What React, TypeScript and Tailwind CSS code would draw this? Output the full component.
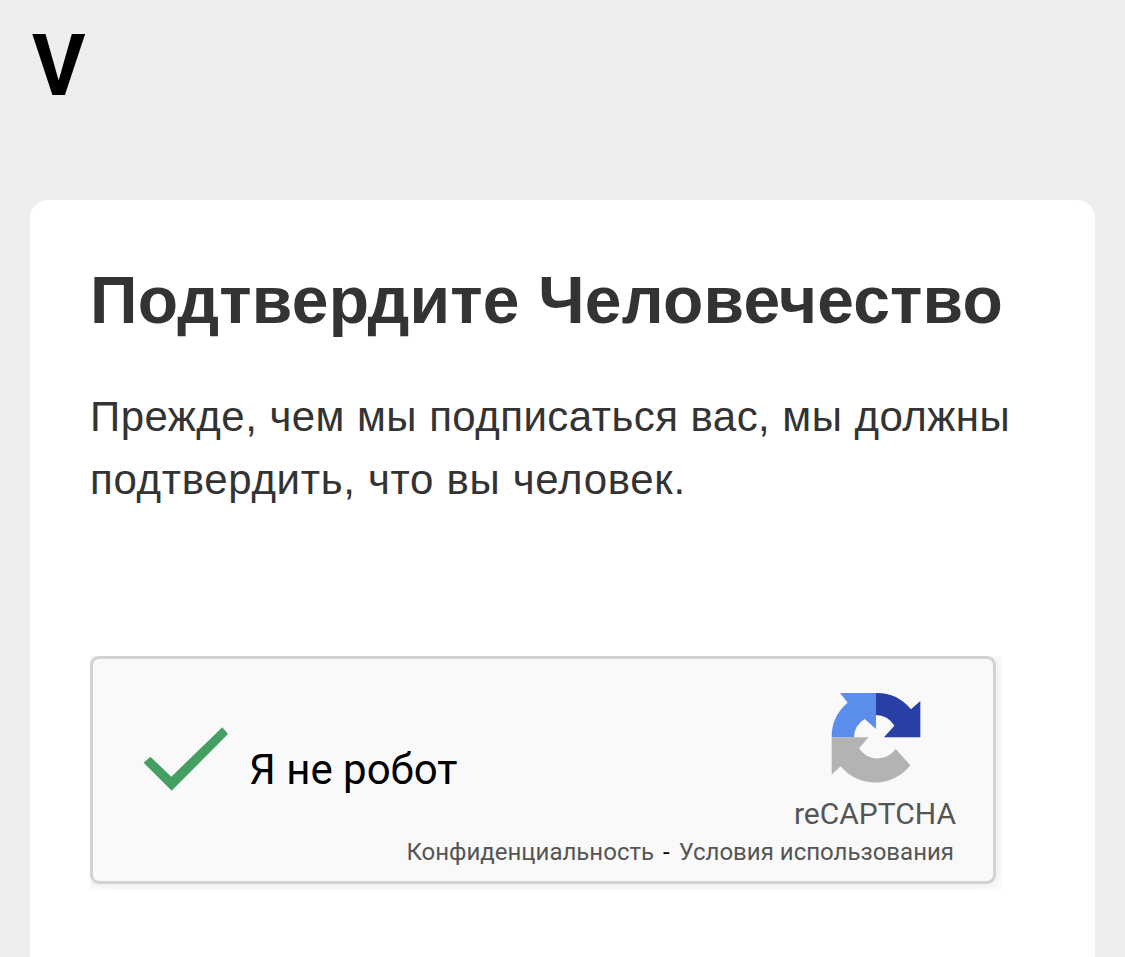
// Human verification page
function CheckMark() {
  return (
    <svg className="block h-[66px] w-[88px] blur-[0.6px]" viewBox="186 258 264 198" fill="#459f62">
      <path d="M191 368L211 350L274 410L427 262L444 282L275 452Z" />
    </svg>
  );
}

function RecaptchaLogo() {
  return (
    <svg className="ml-[2px] block h-[96px] w-[92px] blur-[0.6px]" viewBox="90 60 276 288">
      <path fill="#5b8dec" d="M120 69H228V177L194 147A66 66 0 0 0 162 202H95A133 133 0 0 1 143 98Z" />
      <path fill="#283fa5" d="M228 69A133 133 0 0 1 333 118L361 93V202H252L283 167A67 67 0 0 0 228 135Z" />
      <path
        fill="#b3b3b3"
        d="M95 202H206L177 235A66 66 0 0 0 287 237L331 286A134 134 0 0 1 122 289L95 314Z"
      />
    </svg>
  );
}

function Recaptcha() {
  return (
    <div className="h-[234px] w-[912px] overflow-hidden font-['Roboto',sans-serif]">
      <div className="flex h-[228px] w-[906px] flex-col rounded-[9px] border-[3px] border-[#d3d3d3] bg-[#f9f9f9] shadow-[0_0_12px_3px_rgba(0,0,0,0.08)]">
        <div className="flex h-[174px] justify-between pr-[37px] pl-[49px]">
          <div className="flex pt-[67px]">
            <CheckMark />
            <span className="mt-[18px] ml-[19px] text-[42px] leading-[51px] text-black">Я не робот</span>
          </div>
          <div className="flex flex-col items-center pt-[31px]">
            <RecaptchaLogo />
            <span className="mt-[10px] text-[30px] leading-[36px] text-[#555]">reCAPTCHA</span>
          </div>
        </div>
        <div className="flex justify-end gap-[9px] pt-[5px] pr-[39px] text-[24px] leading-[28px] text-[#555]">
          <a>Конфиденциальность</a>
          <span className="text-black">-</span>
          <a>Условия использования</a>
        </div>
      </div>
    </div>
  );
}

export default function App() {
  return (
    <div className="h-[957px] overflow-hidden bg-[#eeeeee] px-[30px] font-['Liberation_Sans',sans-serif] text-[#333]">
      {/* List name */}
      <header className="h-[200px] pt-[16px]">
        <h1 className="ml-[2px] origin-left scale-x-[0.95] font-['Roboto',sans-serif] text-[86px] leading-[100px] font-bold text-black">
          V
        </h1>
      </header>

      {/* Card */}
      <main className="h-[757px] rounded-t-[18px] bg-white px-[60px] pt-[60px]">
        <h2 className="text-[66px] leading-[80px] font-bold tracking-[0.19px] whitespace-nowrap">
          Подтвердите Человечество
        </h2>
        <p className="mt-[45px] mb-[145px] text-[42px] leading-[63px] whitespace-nowrap">
          <span className="tracking-[0.46px]">Прежде, чем мы подписаться вас, мы должны</span>
          <br />
          <span className="tracking-[0.7px]">подтвердить, что вы человек.</span>
        </p>
        <Recaptcha />
      </main>
    </div>
  );
}
